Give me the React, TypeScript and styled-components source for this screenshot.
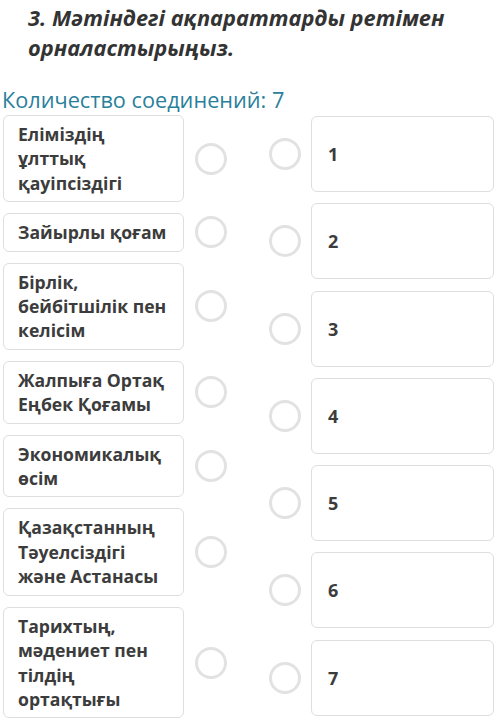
import React from "react";
import styled, { createGlobalStyle } from "styled-components";

const GlobalStyle = createGlobalStyle`
  body {
    margin: 0;
    background: #ffffff;
    font-family: "Open Sans", "Noto Sans", sans-serif;
  }
`;

const Page = styled.div`
  width: 500px;
  padding-top: 3px;
`;

const Title = styled.h2`
  margin: 0 0 0 28px;
  font-size: 21.8px;
  line-height: 30px;
  font-weight: 700;
  font-style: italic;
  color: #333333;
`;

const Count = styled.div`
  margin: 24px 0 2px 2px;
  font-size: 21.7px;
  line-height: 26px;
  color: #2a7f9b;
`;

const Board = styled.div`
  display: grid;
  grid-template-columns: 250px 250px;
`;

const Column = styled.div<{ $right?: boolean }>`
  display: flex;
  flex-direction: column;
  gap: ${(p) => (p.$right ? "11.3px" : "11px")};
  padding-left: ${(p) => (p.$right ? "19px" : "3px")};
  padding-top: ${(p) => (p.$right ? "1px" : "0")};
`;

const Row = styled.div`
  display: flex;
  align-items: center;
`;

const Card = styled.div`
  box-sizing: border-box;
  border: 1px solid #dedede;
  border-radius: 6px;
  background: #fff;
  color: #3c3c3c;
  font-weight: 700;
`;

const TermCard = styled(Card)`
  width: 181px;
  padding: 6px 8px 6px 14px;
  font-size: 17.6px;
  line-height: 24.4px;
`;

const NumberCard = styled(Card)`
  width: 183px;
  height: 76px;
  margin-left: 10px;
  display: flex;
  align-items: center;
  padding-left: 16px;
  font-size: 18px;
`;

const Dot = styled.span<{ $gap: number }>`
  box-sizing: border-box;
  flex: none;
  width: 32px;
  height: 32px;
  border-radius: 50%;
  border: 3px solid #e2e2e2;
  margin: 0 ${(p) => p.$gap}px;
`;

const terms = [
  ["Елімiздің", "ұлттық", "қауіпсіздігі"],
  ["Зайырлы қоғам"],
  ["Бірлік,", "бейбітшілік пен", "келісім"],
  ["Жалпыға Ортақ", "Еңбек Қоғамы"],
  ["Экономикалық", "өсім"],
  ["Қазақстанның", "Тәуелсіздігі", "және Астанасы"],
  ["Тарихтың,", "мәдениет пен", "тілдің", "ортақтығы"],
];

function App() {
  return (
    <Page>
      <GlobalStyle />
      <Title>
        3. Мәтіндегі ақпараттарды ретімен
        <br />
        орналастырыңыз.
      </Title>
      <Count>Количество соединений: 7</Count>
      <Board>
        <Column>
          {terms.map((lines, i) => (
            <Row key={i}>
              <TermCard>
                {lines.map((l, j) => (
                  <div key={j}>{l}</div>
                ))}
              </TermCard>
              <Dot $gap={11} />
            </Row>
          ))}
        </Column>
        <Column $right>
          {terms.map((_, i) => (
            <Row key={i}>
              <Dot $gap={0} />
              <NumberCard>{i + 1}</NumberCard>
            </Row>
          ))}
        </Column>
      </Board>
    </Page>
  );
}

export default App;
